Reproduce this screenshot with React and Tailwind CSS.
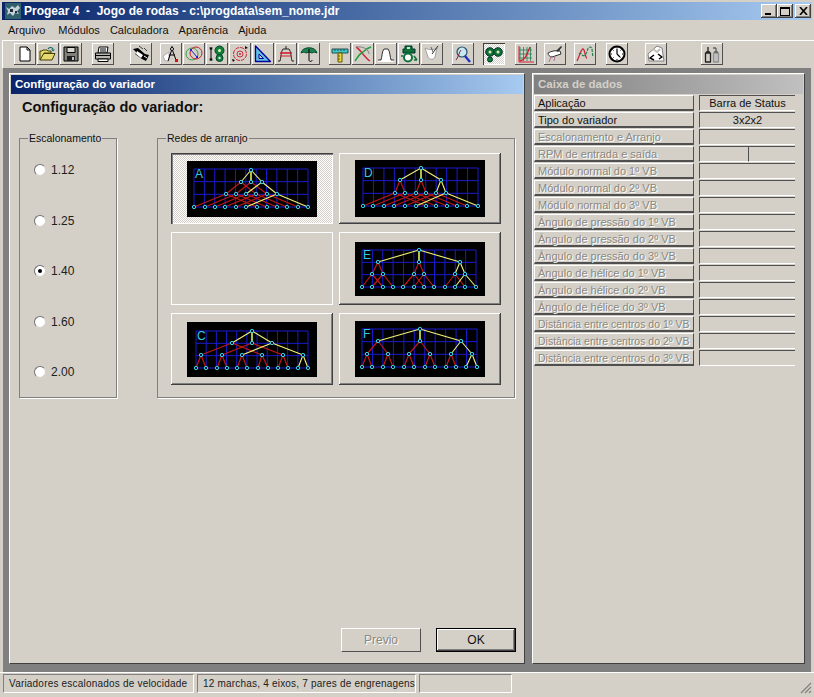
const RAISED = "shadow-[inset_-1px_-1px_0_#404040,inset_1px_1px_0_#fff,inset_-2px_-2px_0_#808080]";
const CHECKER = "bg-[repeating-conic-gradient(#fff_0_25%,#d4d0c8_0_50%)] bg-[length:2px_2px]";

const PAIRS = [[0, 1], [2, 3], [4, 5], [6, 7], [8, 9], [10, 11]];
const SPLIT_THIRDS = [[0, 3], [1, 4], [2, 5]];
const GROUP_THIRDS = [[0, 1], [2, 3], [4, 5]];
const CROSS_BOTTOMS = [[0, 6], [1, 7], [2, 8], [3, 9], [4, 10], [5, 11]];
const WIDE_BOTTOMS = [[0, 2], [1, 3], [4, 6], [5, 7], [8, 10], [9, 11]];

const DIAGRAMS = {
  A: {
    height: 56, grid: [7, 121, 8, 46], label: [8, 17], levels: [9, 21, 33, 46], top: 64,
    mids: [54, 64, 75], thirds: [39, 49, 59, 69, 80, 90],
    bottoms: [7, 18, 28, 38, 49, 59, 70, 80, 90, 100, 111, 121],
    midLinks: SPLIT_THIRDS, thirdLinks: CROSS_BOTTOMS,
  },
  D: {
    height: 57, grid: [8, 123, 8, 46], label: [9, 17], levels: [8, 20, 33, 46], top: 66,
    mids: [45, 66, 86], thirds: [40, 50, 61, 71, 81, 91],
    bottoms: [8, 18, 29, 39, 50, 61, 71, 81, 92, 102, 112, 123],
    midLinks: GROUP_THIRDS, thirdLinks: CROSS_BOTTOMS,
  },
  E: {
    height: 54, grid: [7, 121, 8, 45], label: [8, 17], levels: [8, 20, 32, 45], top: 64,
    mids: [23, 64, 105], thirds: [17, 28, 59, 69, 100, 110],
    bottoms: [7, 17, 28, 38, 48, 59, 69, 79, 90, 100, 110, 121],
    midLinks: GROUP_THIRDS, thirdLinks: WIDE_BOTTOMS,
  },
  C: {
    height: 55, grid: [9, 121, 9, 46], label: [10, 18], levels: [9, 21, 33, 46], top: 65,
    mids: [45, 65, 85], thirds: [14, 35, 55, 75, 96, 116],
    bottoms: [9, 19, 30, 40, 50, 60, 71, 81, 91, 101, 111, 121],
    midLinks: SPLIT_THIRDS, thirdLinks: PAIRS,
  },
  F: {
    height: 56, grid: [7, 122, 8, 46], label: [8, 17], levels: [8, 20, 33, 46], top: 65,
    mids: [23, 65, 106], thirds: [12, 33, 54, 75, 96, 117],
    bottoms: [7, 17, 28, 38, 49, 59, 70, 80, 91, 101, 111, 122],
    midLinks: GROUP_THIRDS, thirdLinks: PAIRS,
  },
};

const ROWS = [
  { label: "Aplicação", value: "Barra de Status", active: true },
  { label: "Tipo do variador", value: "3x2x2", active: true },
  { label: "Escalonamento e Arranjo" },
  { label: "RPM de entrada e saída", split: true },
  { label: "Módulo normal do 1º VB" },
  { label: "Módulo normal do 2º VB" },
  { label: "Módulo normal do 3º VB" },
  { label: "Ângulo de pressão do 1º VB" },
  { label: "Ângulo de pressão do 2º VB" },
  { label: "Ângulo de pressão do 3º VB" },
  { label: "Ângulo de hélice do 1º VB" },
  { label: "Ângulo de hélice do 2º VB" },
  { label: "Ângulo de hélice do 3º VB" },
  { label: "Distância entre centros do 1º VB", tight: true },
  { label: "Distância entre centros do 2º VB", tight: true },
  { label: "Distância entre centros do 3º VB", tight: true },
];

function Diagram({ name }) {
  const d = DIAGRAMS[name];
  const [x0, x1, y0, y1] = d.grid;
  const [ly0, ly1, ly2, ly3] = d.levels;
  const columns = Array.from({ length: 12 }, (_, i) => x0 + ((x1 - x0) * i) / 11);
  const gridRows = Array.from({ length: 4 }, (_, i) => y0 + ((y1 - y0) * i) / 3);

  const red = [];
  const yellow = [];
  d.midLinks.forEach((links, m) =>
    links.forEach((t) => {
      (m === 2 ? yellow : red).push([d.mids[m], ly1, d.thirds[t], ly2]);
    })
  );
  d.thirdLinks.forEach((links, t) =>
    links.forEach((b) => {
      (t === 5 ? yellow : red).push([d.thirds[t], ly2, d.bottoms[b], ly3]);
    })
  );
  d.mids.forEach((x) => yellow.push([d.top, ly0, x, ly1]));

  const nodes = [
    [d.top, ly0],
    ...d.mids.map((x) => [x, ly1]),
    ...d.thirds.map((x) => [x, ly2]),
    ...d.bottoms.map((x) => [x, ly3]),
  ];

  return (
    <svg width="130" height={d.height} viewBox={`0 0 130 ${d.height}`} className="block bg-black">
      {columns.map((x) => (
        <line key={x} x1={x} x2={x} y1={y0} y2={y1} stroke="#1a1ad0" strokeWidth="1" />
      ))}
      {gridRows.map((y) => (
        <line key={y} x1={x0} x2={x1} y1={y} y2={y} stroke="#1a1ad0" strokeWidth="1" />
      ))}
      {red.map((l, i) => (
        <line key={i} x1={l[0]} y1={l[1]} x2={l[2]} y2={l[3]} stroke="#c01818" strokeWidth="1.2" />
      ))}
      {yellow.map((l, i) => (
        <line key={i} x1={l[0]} y1={l[1]} x2={l[2]} y2={l[3]} stroke="#f2f27a" strokeWidth="1.1" />
      ))}
      <line x1={d.top} y1={ly0} x2={d.mids[1]} y2={ly1} stroke="#b4c850" strokeWidth="1.8" />
      {nodes.map((n, i) => (
        <circle key={i} cx={n[0]} cy={n[1]} r="1.7" fill="#001030" stroke="#38d4e4" strokeWidth="1" />
      ))}
      <text x={d.label[0]} y={d.label[1]} fill="#38c8e4" fontSize="12" fontFamily="Liberation Sans, sans-serif">
        {name}
      </text>
    </svg>
  );
}

function ArrangementButton({ name, selected, empty }) {
  if (empty) return <div className="border border-white h-full" />;
  return (
    <button
      type="button"
      className={`h-full flex items-center justify-center ${
        selected
          ? `${CHECKER} shadow-[inset_1px_1px_0_#404040,inset_2px_2px_0_#808080,inset_-1px_-1px_0_#fff]`
          : RAISED
      }`}
    >
      <Diagram name={name} />
    </button>
  );
}

function Radio({ label, checked }) {
  return (
    <label className="flex items-center h-[14px] text-[12px] text-[#202020]">
      <span className="w-3 h-3 rounded-full bg-white border border-t-[#707070] border-l-[#707070] border-r-[#d4d0c8] border-b-[#d4d0c8] flex items-center justify-center">
        {checked && <span className="w-1 h-1 rounded-full bg-black" />}
      </span>
      <span className="ml-[5px]">{label}</span>
    </label>
  );
}

const Svg = ({ children }) => (
  <svg width="18" height="18" viewBox="0 0 18 18" strokeLinejoin="round">
    {children}
  </svg>
);

const ICONS = {
  newFile: (
    <Svg>
      <path d="M4 2h7l3 3v11H4z" fill="#fff" stroke="#000" />
      <path d="M11 2v3h3" fill="none" stroke="#000" />
    </Svg>
  ),
  open: (
    <Svg>
      <path d="M1 15V6h2l1-1h4l1 1h3v2H5l-4 7h12l3-6.500H5" fill="#e8d870" stroke="#404000" />
      <path d="M9 4c1-2 4-2 5 0" fill="none" stroke="#006060" strokeWidth="1.200" />
      <path d="M12 4.500h4l-2 2z" fill="#006060" />
    </Svg>
  ),
  save: (
    <Svg>
      <path d="M2 2h14v14H2z" fill="#808078" stroke="#000" />
      <path d="M5 2.500h8v5H5z" fill="#d8d8d0" stroke="#000" />
      <path d="M5 11h8v5H5z" fill="#202020" />
      <path d="M10 12h2v3h-2z" fill="#c0c0c0" />
    </Svg>
  ),
  print: (
    <Svg>
      <path d="M5 2h9l-1 6H4z" fill="#fff" stroke="#000" />
      <path d="M6 4h6M6 6h6" stroke="#000" />
      <path d="M1.500 8h15v6h-15z" fill="#b8b8b0" stroke="#000" />
      <path d="M2 10.500h14" stroke="#000" />
      <path d="M4 14h10v2.500H4z" fill="#fff" stroke="#000" />
    </Svg>
  ),
  select: (
    <Svg>
      <path d="M1 4l5-1 7 6 4 1-3 6-4-2-7-5 2-1z" fill="#000" />
      <path d="M5 6l6 4-2 3-5-4z" fill="#fff" />
      <path d="M12 3l3 3M7 1l4 3" stroke="#404040" />
      <path d="M12 11l3 2" stroke="#fff" />
    </Svg>
  ),
  compass: (
    <Svg>
      <path d="M1 11l6-4v9H3z" fill="#fff" stroke="#b0a8b0" />
      <path d="M10 1v3M10 4l-4 12M10 4l4 11M7 10h6" stroke="#000" fill="none" />
      <circle cx="10" cy="4" r="1.500" fill="#fff" stroke="#000" />
      <path d="M13 14h3v3h-3z" fill="#d01010" />
    </Svg>
  ),
  circles: (
    <Svg>
      <circle cx="7" cy="9" r="6" fill="none" stroke="#30a040" />
      <circle cx="11" cy="8" r="6" fill="none" stroke="#c02030" />
      <path d="M5 4h2v2H5zM11 11h2v2h-2z" fill="#2020c0" />
      <path d="M6 5l6 7" stroke="#2020c0" />
    </Svg>
  ),
  gearPair: (
    <Svg>
      <path d="M3 3v12M1.500 3h3M1.500 15h3" stroke="#000" fill="none" />
      <path d="M3 2l-1.500 2.500h3zM3 16l-1.500-2.500h3z" fill="#000" />
      <circle cx="11.500" cy="5.500" r="4.500" fill="#108030" stroke="#043" />
      <circle cx="11.500" cy="5.500" r="1.500" fill="#e0f0d0" />
      <circle cx="11.500" cy="13" r="3.500" fill="#108030" stroke="#043" />
      <circle cx="11.500" cy="13" r="1.200" fill="#e0f0d0" />
    </Svg>
  ),
  redCircle: (
    <Svg>
      <circle cx="9" cy="9" r="6.500" fill="none" stroke="#c82838" strokeDasharray="4 1" />
      <circle cx="9" cy="9" r="3" fill="none" stroke="#c82838" />
      <circle cx="9" cy="9" r="1" fill="#c82838" />
      <path d="M14 1l3 2-3 1zM1 14l1 3 2-2z" fill="#000" />
    </Svg>
  ),
  triangle: (
    <Svg>
      <path d="M1.500 1v15.500h15z" fill="#60c0e0" stroke="#0000a0" strokeWidth="1.300" />
      <path d="M5 9v4.500h4.500z" fill="#d4d0c8" stroke="#0000a0" />
    </Svg>
  ),
  tooth: (
    <Svg>
      <path d="M1 16h2c1-3 1-10 3-12h6c2 2 2 9 3 12h2" fill="none" stroke="#202020" />
      <path d="M9 1v3" stroke="#202020" />
      <path d="M3 8h12" stroke="#d02030" strokeWidth="1.600" />
      <path d="M3 11h12" stroke="#d02030" />
    </Svg>
  ),
  umbrella: (
    <Svg>
      <path d="M1 8c1-7 15-7 16 0l-3-1-2 1-3-1-3 1-2-1z" fill="#208050" stroke="#0c5030" />
      <path d="M9 4v11c0 2 3 2 3 0" fill="none" stroke="#000" />
    </Svg>
  ),
  ruler: (
    <Svg>
      <path d="M1 4h16v4H1z" fill="#40c8c8" stroke="#205050" />
      <path d="M4 4v2M7 4v2M10 4v2M13 4v2" stroke="#205050" />
      <path d="M7 8h4v9H7z" fill="#e8d840" stroke="#605000" />
      <path d="M7 11h2M7 14h2" stroke="#605000" />
    </Svg>
  ),
  cross: (
    <Svg>
      <path d="M2 2c4 2 8 10 14 14" fill="none" stroke="#d02838" strokeWidth="1.400" />
      <path d="M1 16c3-4 4-7 8-9 2-2 4-4 8-5" fill="none" stroke="#20a040" strokeWidth="1.400" />
      <path d="M2 2c8-1 13 3 13 7" fill="none" stroke="#808080" />
    </Svg>
  ),
  whiteTooth: (
    <Svg>
      <path d="M1 15h3c1-3 1-9 3-11h4c2 2 2 8 3 11h3v2H1z" fill="#fff" />
      <path d="M1 15h3c1-3 1-9 3-11h4c2 2 2 8 3 11h3" fill="none" stroke="#303030" />
    </Svg>
  ),
  greenGear: (
    <Svg>
      <path d="M5 1h7v3h3v4H3V4h2z" fill="#107038" stroke="#033" />
      <path d="M7 2h3v2H7z" fill="#c8e8c8" />
      <circle cx="8" cy="12.500" r="4" fill="#fff" stroke="#107038" strokeWidth="2" />
      <path d="M1 11h2M14 11l3 4M14 15h3" stroke="#107038" strokeWidth="1.500" />
    </Svg>
  ),
  cup: (
    <Svg>
      <path d="M2 3c3 2 9 2 12 0l-2 9c-1 3-6 3-7 0z" fill="#fff" stroke="#a0a0a0" />
      <path d="M9 9l6-8" stroke="#303030" />
      <path d="M10 7l-2-5" stroke="#606060" />
    </Svg>
  ),
  magnifier: (
    <Svg>
      <circle cx="8" cy="7" r="5" fill="#c8e8f0" stroke="#205070" strokeWidth="1.200" />
      <path d="M11 11l5 6" stroke="#2030c0" strokeWidth="2.400" />
      <path d="M2 15c3-4 3-8 5-10" fill="none" stroke="#802040" />
    </Svg>
  ),
  gears: (
    <Svg>
      <circle cx="5" cy="7" r="4.300" fill="#107030" stroke="#033" />
      <circle cx="5" cy="7" r="1.500" fill="#d8e8c8" />
      <circle cx="13" cy="7" r="4.300" fill="#107030" stroke="#033" />
      <circle cx="13" cy="7" r="1.500" fill="#d8e8c8" />
      <circle cx="5" cy="14.500" r="2.500" fill="#108030" stroke="#033" />
    </Svg>
  ),
  chart: (
    <Svg>
      <path d="M3 2v14M6.500 2v14M10 2v14M13.500 2v14M2 5h13M2 9h13M2 13h13" stroke="#208050" strokeWidth="0.800" />
      <path d="M2 1v16h15" fill="none" stroke="#d02030" />
      <path d="M3 16c6-1 7-8 10-14" fill="none" stroke="#d02030" strokeWidth="1.400" />
    </Svg>
  ),
  plane: (
    <Svg>
      <path d="M2 8c3-2 9-3 12-2l1 3-9 3c-2 0-4-2-4-4z" fill="#fff" stroke="#303030" />
      <path d="M10 6l5-5 1 1-4 5z" fill="#303030" />
      <path d="M5 12l-2 5M9 11l-1 5" stroke="#b07090" />
    </Svg>
  ),
  waves: (
    <Svg>
      <path d="M1 16C4 10 5 4 7 4s2 9 4 9" fill="none" stroke="#d02838" strokeWidth="1.300" />
      <path d="M3 9c2-3 3 4 6 1s2-8 5-8 2 7 3 9" fill="none" stroke="#208048" strokeWidth="1.200" strokeDasharray="3 1" />
    </Svg>
  ),
  clock: (
    <Svg>
      <circle cx="9" cy="9" r="7.500" fill="#fff" stroke="#000" strokeWidth="2" />
      <path d="M9 9V4M9 9l3 3" stroke="#000" strokeWidth="1.200" />
      <path d="M9 2.500v1M15 9h-1M9 15v-1M3 9h1M4.500 4.500l1 1M13.500 4.500l-1 1M4.500 13.500l1-1M13.500 13.500l-1-1" stroke="#000" />
    </Svg>
  ),
  page: (
    <Svg>
      <path d="M1 9l9-8 5 2 2 13H2z" fill="#fff" stroke="#808080" />
      <path d="M7 10l-4 3 4 2M11 9l4 3-3 2" fill="none" stroke="#000" strokeWidth="1.500" />
      <path d="M6 4l4 3 3-3" stroke="#c0c0b8" strokeWidth="2" fill="none" />
    </Svg>
  ),
  bottles: (
    <Svg>
      <path d="M2.500 8h5v9h-5z" fill="#d4d0c8" stroke="#202020" strokeWidth="1.300" />
      <path d="M10.500 8h5v9h-5z" fill="#c0c0c0" stroke="#909090" strokeWidth="1.300" />
      <path d="M5 2v5M3 7h4" stroke="#202020" strokeWidth="1.300" />
      <path d="M10 3l3 0M13 3v4M11 7h4" stroke="#606060" strokeWidth="1.300" fill="none" />
    </Svg>
  ),
};

// [icon, left margin from the previous button]
const TOOLS = [
  ["newFile", 0], ["open", 1], ["save", 1], ["print", 10], ["select", 16],
  ["compass", 8], ["circles", 1], ["gearPair", 1], ["redCircle", 1], ["triangle", 1],
  ["tooth", 1], ["umbrella", 1], ["ruler", 9], ["cross", 1], ["whiteTooth", 1],
  ["greenGear", 1], ["cup", 1], ["magnifier", 9], ["gears", 9], ["chart", 10],
  ["plane", 7], ["waves", 8], ["clock", 10], ["page", 17], ["bottles", 34],
];

function ToolButton({ icon, gap }) {
  const active = icon === "gears";
  return (
    <button
      type="button"
      style={{ marginLeft: gap }}
      className={`w-[22px] h-[22px] flex items-center justify-center ${
        active
          ? `${CHECKER} shadow-[inset_1px_1px_0_#404040,inset_-1px_-1px_0_#fff]`
          : "shadow-[inset_-1px_-1px_0_#505050,inset_1px_1px_0_#fff]"
      }`}
    >
      {ICONS[icon]}
    </button>
  );
}

function WindowButton({ children }) {
  return (
    <button type="button" className={`w-4 h-[14px] bg-[#d4d0c8] flex items-center justify-center ${RAISED}`}>
      {children}
    </button>
  );
}

function DataRow({ row }) {
  const labelTone = row.active
    ? "text-[#101010]"
    : "text-[#8a8880] [text-shadow:1px_1px_0_#fff]";
  const labelSize = row.tight ? "text-[10.5px]" : "text-[11px]";
  const cell = "border-t border-l border-t-[#505050] border-l-[#505050] border-b border-b-white h-4";
  return (
    <div className="flex h-4 mb-px">
      <div className={`w-[160px] pl-[3px] leading-[15px] whitespace-nowrap border-t border-l border-t-white border-l-white border-b-2 border-b-[#505050] border-r border-r-[#505050] ${labelSize} ${labelTone}`}>
        {row.label}
      </div>
      {row.split ? (
        <div className="ml-[5px] w-[96px] flex">
          <div className={`${cell} w-[49px]`} />
          <div className={`${cell} flex-1`} />
        </div>
      ) : (
        <div className={`ml-[5px] w-[96px] text-center text-[11px] leading-[15px] text-[#101010] ${cell}`}>
          {row.value}
        </div>
      )}
    </div>
  );
}

export default function App() {
  const statusCell = "h-[19px] border border-t-[#808080] border-l-[#808080] border-r-white border-b-white pl-[5px] text-[10px] leading-[18px] tracking-[0.2px] text-[#202020] whitespace-nowrap";

  return (
    <div className="w-[814px] h-[697px] overflow-hidden flex flex-col bg-[#d4d0c8] font-['Liberation_Sans',sans-serif]">
      <header className="mx-[2px] mt-[2px] h-[18px] flex items-center bg-gradient-to-r from-[#0a246a] to-[#a6caf0]">
        <svg width="16" height="16" viewBox="0 0 16 16" className="ml-[3px]">
          <rect width="16" height="16" fill="#30606c" />
          <path d="M1 4l3 2 3-3 3 2 3-3 2 3-3 3 2 3-4-1-2 3-3-3-3 2 1-4z" fill="#c8d0d8" />
          <path d="M5 6h3v3H5zM10 8h2v2h-2z" fill="#203040" />
        </svg>
        <h1 className="ml-[3px] text-[12px] font-bold text-white whitespace-pre">
          {"Progear 4  -  Jogo de rodas - c:\\progdata\\sem_nome.jdr"}
        </h1>
        <div className="ml-auto mr-px flex items-center">
          <WindowButton>
            <span className="w-[6px] h-[2px] bg-black mt-[6px] mr-[2px]" />
          </WindowButton>
          <WindowButton>
            <span className="w-[10px] h-[9px] border border-t-2 border-black" />
          </WindowButton>
          <div className="ml-[2px]">
            <WindowButton>
              <svg width="9" height="8" viewBox="0 0 9 8">
                <path d="M1 0l7 8M8 0L1 8" stroke="#000" strokeWidth="1.600" />
              </svg>
            </WindowButton>
          </div>
        </div>
      </header>

      <nav className="h-5 flex items-center pl-2 gap-[10px] text-[11px] text-[#101010]">
        <span className="mr-[3px]">Arquivo</span>
        <span>Módulos</span>
        <span>Calculadora</span>
        <span>Aparência</span>
        <span>Ajuda</span>
      </nav>

      <div className="h-[28px] ml-[2px] pl-[11px] pt-[2px] flex items-start border-t border-l border-white">
        {TOOLS.map(([icon, gap]) => (
          <ToolButton key={icon} icon={icon} gap={gap} />
        ))}
      </div>

      <main className="h-[604px] mx-[3px] bg-[#808080] pl-[6px] pr-[5px] pt-[5px] pb-[8px] flex gap-[7px]">
        <section className="w-[516px] p-px border border-t-white border-l-white border-r-[#404040] border-b-[#404040] bg-[#d4d0c8] flex flex-col">
          <h2 className="h-[19px] pl-[4px] text-[11.5px] leading-[19px] font-bold text-white bg-gradient-to-r from-[#0a246a] to-[#a6caf0]">
            Configuração do variador
          </h2>
          <h3 className="h-[26px] pl-[11px] text-[14.5px] leading-[26px] font-bold text-[#101010]">
            Configuração do variador:
          </h3>

          <div className="flex pl-[8px] mt-[11px]">
            <fieldset className="w-[98px] h-[267px] border border-[#808080] shadow-[1px_1px_0_#fff]">
              <legend className="ml-[8px] px-px text-[10.5px] leading-[14px] text-[#101010]">Escalonamento</legend>
              <div className="pl-[14px] pt-[18px] h-[234px] flex flex-col justify-between">
                <Radio label="1.12" />
                <Radio label="1.25" />
                <Radio label="1.40" checked />
                <Radio label="1.60" />
                <Radio label="2.00" />
              </div>
            </fieldset>

            <fieldset className="ml-[40px] w-[358px] h-[267px] border border-[#808080] shadow-[1px_1px_0_#fff]">
              <legend className="ml-[8px] px-px text-[10.5px] leading-[14px] text-[#101010]">Redes de arranjo</legend>
              <div className="grid grid-cols-[162px_162px] grid-rows-[71px_73px_72px] gap-x-[6px] gap-y-[8px] pl-[13px] pt-[8px]">
                <ArrangementButton name="A" selected />
                <ArrangementButton name="D" />
                <ArrangementButton empty />
                <ArrangementButton name="E" />
                <ArrangementButton name="C" />
                <ArrangementButton name="F" />
              </div>
            </fieldset>
          </div>

          <div className="mt-auto mb-[10px] mr-[7px] flex justify-end gap-[15px]">
            <button type="button" className="w-[80px] h-[24px] border border-t-white border-l-white border-r-[#505050] border-b-[#505050] text-[12px] text-[#8a8880] [text-shadow:1px_1px_0_#fff]">
              Previo
            </button>
            <button type="button" className={`w-[80px] h-[24px] border border-black text-[12px] text-[#101010] ${RAISED}`}>
              OK
            </button>
          </div>
        </section>

        <aside className="w-[273px] p-px border border-t-white border-l-white border-r-[#404040] border-b-[#404040] bg-[#d4d0c8] flex flex-col">
          <h2 className="h-[19px] pl-[4px] text-[11.5px] leading-[19px] font-bold text-[#d4d0c8] bg-gradient-to-r from-[#808080] to-[#c0c0c0]">
            Caixa de dados
          </h2>
          <div className="pt-px">
            {ROWS.map((row) => (
              <DataRow key={row.label} row={row} />
            ))}
          </div>
        </aside>
      </main>

      <footer className="flex-1 border-t border-white pt-px pl-[3px] flex gap-[3px]">
        <div className={`${statusCell} w-[191px]`}>Variadores escalonados de velocidade</div>
        <div className={`${statusCell} w-[219px]`}>12 marchas, 4 eixos, 7 pares de engrenagens</div>
        <div className={`${statusCell} w-[93px]`} />
        <svg width="12" height="12" viewBox="0 0 12 12" className="ml-auto self-end mb-[3px] mr-[2px]">
          <path d="M11 1L1 11M11 5l-6 6M11 9l-2 2" stroke="#808080" strokeWidth="1.200" />
        </svg>
      </footer>
    </div>
  );
}
